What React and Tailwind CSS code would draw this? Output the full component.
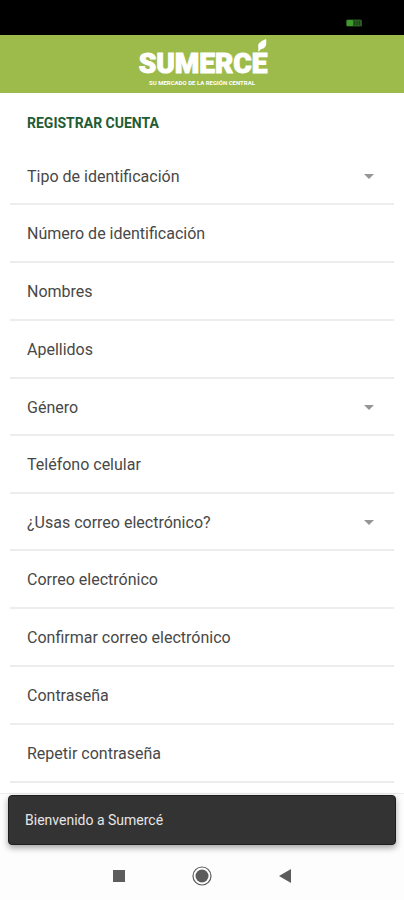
import React, { useState } from 'react';

const fields = [
  {
    name: 'tipoIdentificacion',
    label: 'Tipo de identificación',
    options: ['Cédula de ciudadanía', 'Cédula de extranjería', 'NIT'],
  },
  { name: 'numeroIdentificacion', label: 'Número de identificación', type: 'text' },
  { name: 'nombres', label: 'Nombres', type: 'text' },
  { name: 'apellidos', label: 'Apellidos', type: 'text' },
  { name: 'genero', label: 'Género', options: ['Femenino', 'Masculino', 'Otro'] },
  { name: 'celular', label: 'Teléfono celular', type: 'tel' },
  { name: 'usaCorreo', label: '¿Usas correo electrónico?', options: ['Sí', 'No'] },
  { name: 'correo', label: 'Correo electrónico', type: 'email' },
  { name: 'confirmarCorreo', label: 'Confirmar correo electrónico', type: 'email' },
  { name: 'contrasena', label: 'Contraseña', type: 'password' },
  { name: 'repetirContrasena', label: 'Repetir contraseña', type: 'password' },
];

function StatusBar() {
  return (
    <div className="flex h-[35px] shrink-0 items-end justify-end bg-black pr-[41px] pb-2">
      <svg width="17" height="8" viewBox="0 0 17 8" aria-hidden="true">
        <rect x="0" y="0.5" width="16" height="7" rx="1.5" fill="#2b5a22" />
        <rect x="1" y="1" width="6" height="6" rx="1" fill="#3f9a2c" />
        <path d="M8.500 2v4M11 2v4M13.500 2v4" stroke="#1a3f16" strokeWidth="1" />
      </svg>
    </div>
  );
}

function Header() {
  return (
    <header className="flex h-[58px] shrink-0 flex-col items-center bg-[#9dbb4a] pt-[15px] text-white">
      <div className="relative ml-0.5 text-[28px] leading-7 font-black [-webkit-text-stroke:1px_white]">
        SUMERCE
        <svg
          className="absolute -top-[11px] right-0"
          width="10"
          height="13"
          viewBox="0 0 10 13"
          fill="currentColor"
          aria-hidden="true"
        >
          <path d="M9 0C9.800 4 9.500 8.500 5.500 9.800C4 10.300 2.800 10.500 2.200 12.500L1.200 12.200C1.300 10.500 1.500 9.500 1.200 8C0.500 4 4.500 2 9 0Z" />
        </svg>
      </div>
      <p className="text-[6px] leading-[10px] font-bold">
        SU MERCADO DE LA REGIÓN CENTRAL
      </p>
    </header>
  );
}

function Field({ field, value, onChange }) {
  return (
    <div className="grid items-center border-b-2 border-[#ededed] text-base text-[#484848]">
      {field.options ? (
        <select
          id={field.name}
          name={field.name}
          value={value}
          onChange={onChange}
          className="col-start-1 row-start-1 h-[55px] w-full appearance-none bg-transparent px-[17px] focus:outline-none"
        >
          <option value=""></option>
          {field.options.map((option) => (
            <option key={option} value={option}>{option}</option>
          ))}
        </select>
      ) : (
        <input
          id={field.name}
          name={field.name}
          type={field.type}
          value={value}
          onChange={onChange}
          className="col-start-1 row-start-1 h-14 w-full bg-transparent px-[17px] focus:outline-none"
        />
      )}
      {/* The label sits in the box until there is a value */}
      <label
        htmlFor={field.name}
        className={`pointer-events-none col-start-1 row-start-1 px-[17px] pt-0.5 ${value ? 'invisible' : ''}`}
      >
        {field.label}
      </label>
      {field.options && (
        <svg
          className="pointer-events-none col-start-1 row-start-1 mt-0.5 mr-5 justify-self-end"
          width="10"
          height="5"
          viewBox="0 0 10 5"
          fill="#969696"
          aria-hidden="true"
        >
          <path d="M0 0h10L5 5z" />
        </svg>
      )}
    </div>
  );
}

function SystemNav() {
  return (
    <nav className="flex h-[49px] items-center justify-center gap-[63px] text-[#5c5c5c]">
      <button type="button" aria-label="Recientes" className="flex w-5 justify-center">
        <svg width="12" height="12" viewBox="0 0 12 12" fill="currentColor">
          <rect width="12" height="12" />
        </svg>
      </button>
      <button type="button" aria-label="Inicio" className="flex w-5 justify-center">
        <svg width="20" height="20" viewBox="0 0 20 20">
          <circle cx="10" cy="10" r="9" fill="none" stroke="currentColor" strokeWidth="1.200" />
          <circle cx="10" cy="10" r="6.500" fill="currentColor" />
        </svg>
      </button>
      <button type="button" aria-label="Atrás" className="flex w-5 justify-center">
        <svg width="12" height="14" viewBox="0 0 12 14" fill="currentColor">
          <path d="M12 0v14L0 7z" />
        </svg>
      </button>
    </nav>
  );
}

export default function App() {
  const [formData, setFormData] = useState({});

  const handleChange = (e) => {
    const { name, value } = e.target;
    setFormData(prev => ({
      ...prev,
      [name]: value
    }));
  };

  return (
    <div className="flex h-screen flex-col overflow-hidden bg-white font-['Roboto',sans-serif]">
      <StatusBar />
      <Header />

      {/* Registration form */}
      <main className="min-h-0 flex-1 overflow-hidden px-[10px] pt-5">
        <h1 className="px-[17px] text-sm leading-5 font-bold text-[#1f5c34]">REGISTRAR CUENTA</h1>
        <form className="mt-[15px]">
          {fields.map((field) => (
            <Field
              key={field.name}
              field={field}
              value={formData[field.name] || ''}
              onChange={handleChange}
            />
          ))}
        </form>
      </main>

      {/* Snackbar and system buttons */}
      <footer className="shrink-0 border-t border-[#ececec] bg-[#fdfdfd]">
        <div
          role="status"
          className="mx-2 mt-px flex h-[50px] items-center rounded-sm border border-[#1e1e1e] bg-[#333333] px-4 text-sm text-[#e6e6e6] shadow-[0_3px_6px_rgba(0,0,0,0.35)]"
        >
          Bienvenido a Sumercé
        </div>
        <div className="pt-[6px]">
          <SystemNav />
        </div>
      </footer>
    </div>
  );
}
